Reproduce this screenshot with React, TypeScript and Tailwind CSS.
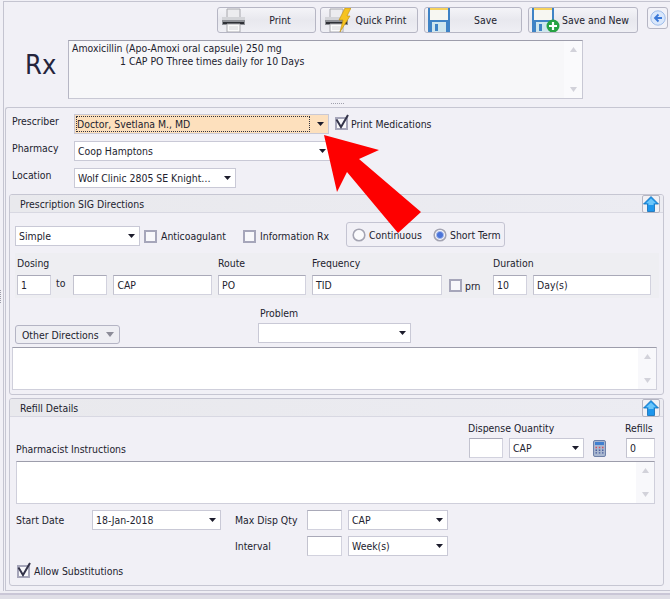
import type { ReactNode } from "react"

const font = "font-['DejaVu_Sans_Condensed','DejaVu_Sans',sans-serif]"

function Arrow() {
  return (
    <svg width="7" height="4" viewBox="0 0 7 4" className="shrink-0">
      <path d="M0 0H7L3.5 4Z" fill="#1c1c2c" />
    </svg>
  )
}

function Combo({ value, className, focus }: { value?: string; className: string; focus?: boolean }) {
  return (
    <div
      className={`flex h-[20px] shrink-0 items-center border border-[#c9c9d6] pr-[4px] ${
        focus ? "bg-[#fde0bd] pl-px" : "bg-white pl-[3px]"
      } ${className}`}
    >
      {focus ? (
        <div className="flex h-[16px] min-w-0 flex-1 items-center border border-dotted border-[#33333c]">{value}</div>
      ) : (
        <div className="min-w-0 flex-1 whitespace-nowrap">{value}</div>
      )}
      <div className="flex w-[14px] justify-end">
        <Arrow />
      </div>
    </div>
  )
}

function Input({ value, className }: { value?: string; className: string }) {
  return (
    <div className={`flex h-[20px] shrink-0 items-center border border-[#d2d2de] border-t-[#a9a9b8] border-l-[#c3c3cf] bg-white pl-[3px] ${className}`}>
      {value}
    </div>
  )
}

function Check({ on, className = "" }: { on?: boolean; className?: string }) {
  return (
    <div className={`relative h-[13px] w-[13px] shrink-0 border-2 border-[#a6a6ba] bg-[#f8f8fb] ${className}`}>
      {on && (
        <svg width="13" height="16" viewBox="0 0 13 16" className="absolute left-[-1px] top-[-6px] overflow-visible">
          <path d="M0.5 6.5L5 14L12 2" fill="none" stroke="#34344a" strokeWidth="2" />
        </svg>
      )}
    </div>
  )
}

function Radio({ on }: { on?: boolean }) {
  return (
    <svg width="14" height="14" viewBox="0 0 14 14" className="shrink-0">
      <circle cx="7" cy="7" r="5.8" fill="#fafafc" stroke="#a4a4b2" strokeWidth="1.6" />
      {on && <circle cx="7" cy="7" r="3.6" fill="#4b74d8" stroke="#a9bcef" />}
    </svg>
  )
}

function Printer() {
  return (
    <svg width="24" height="24" viewBox="0 0 24 24" className="shrink-0">
      <path d="M6 1H19V10H6Z" fill="#ececef" stroke="#a8a8ae" />
      <path d="M1 9H24V17H1Z" fill="#8f9197" />
      <path d="M1 9H24V12H1Z" fill="#d3d4d8" />
      <path d="M2 14H23V16H2Z" fill="#2e3036" />
      <path d="M6 16H19V24H6Z" fill="#fbfbfb" stroke="#a8a8ae" />
      <path d="M8 19H17M8 21H17" stroke="#d6d6da" />
    </svg>
  )
}

function Bolt() {
  return (
    <svg width="13" height="24" viewBox="0 0 13 24" className="shrink-0">
      <path d="M7 0H13L9 8H12L2 24L5 12H1Z" fill="#f6c321" stroke="#b98a10" strokeWidth="0.6" />
    </svg>
  )
}

function Floppy({ plus }: { plus?: boolean }) {
  return (
    <svg width="22" height="24" viewBox="0 0 22 24" className="shrink-0 overflow-visible">
      <path d="M0 0H22V24H0Z" fill="#3f83c6" />
      <path d="M2 0H20V2H2Z" fill="#f6d25c" />
      <path d="M2 2H20V12H2Z" fill="#f7f7f2" />
      <path d="M4 14H18V24H4Z" fill="#cfe6ee" />
      <path d="M7 16H10V23H7Z" fill="#3f83c6" />
      {plus && (
        <>
          <circle cx="21" cy="18" r="6.5" fill="#27a243" />
          <path d="M21 14V22M17 18H25" stroke="#fff" strokeWidth="2.2" />
        </>
      )}
    </svg>
  )
}

function Tool({ children, label, className }: { children: ReactNode; label: string; className: string }) {
  return (
    <div className={`flex h-[26px] shrink-0 items-center overflow-hidden rounded-[3px] border border-[#b6b6c4] bg-gradient-to-b from-[#f4f4f8] via-[#e8e8ee] to-[#efeff4] pl-[3px] ${className}`}>
      {children}
      <div className="flex-1 whitespace-nowrap text-center">{label}</div>
    </div>
  )
}

function UpButton() {
  return (
    <div className="flex h-[18px] w-[18px] items-center justify-center rounded-[2px] border border-[#b5b5c2] bg-[#f1f1f5]">
      <svg width="16" height="16" viewBox="0 0 16 16">
        <path d="M8 0.5L15.5 8H11.5V15.5H4.5V8H0.5Z" fill="#1e96ec" stroke="#0c6cb8" strokeWidth="0.8" />
        <path d="M8 2.5L3 7.2H5.5V9H10.5V7.2H13Z" fill="#6cc6fa" />
      </svg>
    </div>
  )
}

function SectionHead({ title }: { title: string }) {
  return (
    <div className="flex h-[18px] items-start justify-between border-b border-[#d8d8e2] bg-gradient-to-r from-[#e9e9ed] to-[#ececf2] pl-[10px] pr-[3px]">
      <span className="pt-[3px]">{title}</span>
      <UpButton />
    </div>
  )
}

function Memo({ className }: { className: string }) {
  return (
    <div className={`flex border border-[#cfcfdb] border-t-[#9d9dab] bg-white ${className}`}>
      <div className="flex-1" />
      <div className="flex w-[18px] flex-col items-center justify-between bg-[#f8f8fb] py-[6px]">
        <svg width="7" height="5" viewBox="0 0 7 5"><path d="M0 5H7L3.5 0Z" fill="#d2d2da" /></svg>
        <svg width="7" height="5" viewBox="0 0 7 5"><path d="M0 0H7L3.5 5Z" fill="#d2d2da" /></svg>
      </div>
    </div>
  )
}

export default function App() {
  return (
    <div className={`${font} relative h-[599px] w-[670px] overflow-hidden bg-[#dfdee6] text-[10.4px] leading-[13px] text-[#22222e]`}>
      <div className="h-[591px] bg-[#f1f0f6] pl-[3px] pt-px">
        <div className="h-[590px] border-l border-t border-[#c4c4d0]">
          {/* toolbar */}
          <div className="flex pt-[5px]">
            <Tool label="Print" className="ml-[213px] w-[99px]"><Printer /></Tool>
            <Tool label="Quick Print" className="ml-[4px] w-[98px] pr-[6px]">
              <Printer />
              <div className="ml-[-10px]"><Bolt /></div>
            </Tool>
            <Tool label="Save" className="ml-[6px] w-[98px]"><Floppy /></Tool>
            <Tool label="Save and New" className="ml-[6px] w-[110px]"><Floppy plus /></Tool>
            <div className="ml-[9px] flex h-[22px] w-[21px] items-center justify-center rounded-[3px] border border-[#b6b6c4] bg-[#f2f2f8]">
              <svg width="16" height="16" viewBox="0 0 16 16">
                <circle cx="8" cy="8" r="7.2" fill="#d9e7fb" stroke="#9fbdea" />
                <path d="M8.5 4.5L5 8L8.5 11.5M5 8H12" fill="none" stroke="#3b78d8" strokeWidth="1.8" />
              </svg>
            </div>
          </div>

          {/* drug summary */}
          <div className="mt-[7px] flex">
            <div className="w-[64px] pl-[21px] pt-[7px] text-[27px] leading-[36px] text-[#24243c]">Rx</div>
            <div className="flex h-[59px] w-[515px] border border-[#c8c8d4] border-l-[#b6b6c4] border-t-[#9d9dab] bg-[#f7f7f9]">
              <div className="flex-1 pl-[3px] pt-[1px]">
                <div>Amoxicillin (Apo-Amoxi oral capsule) 250 mg</div>
                <div className="pl-[48px]">1 CAP PO Three times daily for 10 Days</div>
              </div>
              <div className="flex w-[18px] flex-col items-center justify-between bg-[#fafafc] py-[6px]">
                <svg width="7" height="5" viewBox="0 0 7 5"><path d="M0 5H7L3.5 0Z" fill="#d2d2da" /></svg>
                <svg width="7" height="5" viewBox="0 0 7 5"><path d="M0 0H7L3.5 5Z" fill="#d2d2da" /></svg>
              </div>
            </div>
          </div>

          {/* splitter grip */}
          <div className="ml-[327px] mt-[4px] h-[1px] w-[13px] border-t border-dotted border-[#a0a0ac]" />

          {/* main panel */}
          <div className="ml-px mt-[3px] h-[484px] rounded-tl-[3px] border-b border-l border-t border-[#c6c6d2]">
            <div className="pl-[6px] pt-[6px]">
              <div className="flex items-start">
                <span className="w-[62px] pt-px">Prescriber</span>
                <Combo value="Doctor, Svetlana M., MD" focus className="w-[255px]" />
                <Check on className="ml-[6px] mt-[3px]" />
                <span className="ml-[3px] mt-[4px]">Print Medications</span>
              </div>
              <div className="mt-[7px] flex items-start">
                <span className="w-[62px] pt-px">Pharmacy</span>
                <Combo value="Coop Hamptons" className="w-[257px]" />
              </div>
              <div className="mt-[7px] flex items-start">
                <span className="w-[62px] pt-px">Location</span>
                <Combo value="Wolf Clinic 2805 SE Knight…" className="w-[162px]" />
              </div>
            </div>

            {/* sig */}
            <div className="ml-[3px] mt-[6px] h-[201px] w-[655px] overflow-hidden rounded-[3px] border border-[#c6c6d2]">
              <SectionHead title="Prescription SIG Directions" />
              <div className="flex h-[34px] items-end pl-[5px]">
                <Combo value="Simple" className="mb-px w-[125px]" />
                <Check className="mb-[4px] ml-[4px]" />
                <span className="mb-[4px] ml-[4px] w-[82px] whitespace-nowrap">Anticoagulant</span>
                <Check className="mb-[4px]" />
                <span className="mb-[4px] ml-[4px] w-[86px] whitespace-nowrap">Information Rx</span>
                <div className="flex h-[25px] w-[159px] items-center rounded-[3px] border border-[#c4c4d2] pl-[5px]">
                  <Radio />
                  <span className="ml-[3px] mt-[2px] w-[64px] whitespace-nowrap">Continuous</span>
                  <Radio on />
                  <span className="ml-[3px] mt-px whitespace-nowrap">Short Term</span>
                </div>
              </div>

              {/* dosing */}
              <div className="ml-[5px] mt-[6px] flex h-[45px] w-[644px] items-start bg-[#eeeef2] pl-[2px] pt-[4px]">
                <div className="w-[201px]">
                  <div className="mb-[5px] h-[13px]">Dosing</div>
                  <div className="flex items-center">
                    <Input value="1" className="w-[34px]" />
                    <span className="ml-[5px] mr-[8px] mt-[-4px]">to</span>
                    <Input className="w-[34px]" />
                    <Input value="CAP" className="ml-[6px] w-[99px]" />
                  </div>
                </div>
                <div className="w-[94px]">
                  <div className="mb-[5px] h-[13px]">Route</div>
                  <Input value="PO" className="w-[88px]" />
                </div>
                <div className="w-[137px]">
                  <div className="mb-[5px] h-[13px]">Frequency</div>
                  <Input value="TID" className="w-[130px]" />
                </div>
                <div className="flex w-[44px] items-center pt-[21px]">
                  <Check />
                  <span className="ml-[3px] mt-[2px]">prn</span>
                </div>
                <div>
                  <div className="mb-[5px] h-[13px]">Duration</div>
                  <div className="flex">
                    <Input value="10" className="w-[34px]" />
                    <Input value="Day(s)" className="ml-[6px] w-[118px]" />
                  </div>
                </div>
              </div>

              <div className="flex items-start pl-[5px]">
                <div className="mt-[27px] flex h-[19px] w-[105px] items-center rounded-[3px] border border-[#b4b4c4] bg-[#eeeef3] pl-[6px]">
                  <span className="mt-px flex-1 whitespace-nowrap">Other Directions</span>
                  <svg width="8" height="5" viewBox="0 0 8 5" className="mr-[5px]"><path d="M0 0H8L4 5Z" fill="#8c8c98" /></svg>
                </div>
                <div className="ml-[138px] mt-[9px] w-[153px]">
                  <div className="mb-[3px] pl-[2px]">Problem</div>
                  <Combo className="w-[153px]" />
                </div>
              </div>
              <Memo className="ml-[2px] mt-[3px] h-[43px] w-[645px]" />
            </div>

            {/* refill */}
            <div className="ml-[3px] mt-[3px] h-[188px] w-[655px] overflow-hidden rounded-[3px] border border-[#c6c6d2]">
              <SectionHead title="Refill Details" />
              <div className="flex h-[42px] pl-[6px]">
                <div className="w-[452px] pt-[26px]">Pharmacist Instructions</div>
                <div className="pt-[5px]">
                  <div className="mb-[3px] whitespace-nowrap">Dispense Quantity</div>
                  <div className="flex">
                    <Input className="ml-px w-[34px]" />
                    <Combo value="CAP" className="ml-[6px] w-[75px]" />
                    <svg width="13" height="17" viewBox="0 0 13 17" className="ml-[9px] mt-[2px]">
                      <rect x="0.5" y="0.5" width="12" height="16" rx="1.5" fill="#a9b7d0" stroke="#6e80a8" />
                      <rect x="2" y="2" width="9" height="3" fill="#3f7fd0" />
                      <path d="M2.5 7.5H4M5.8 7.5H7.3M9 7.5H10.5" stroke="#d8505a" strokeWidth="1.4" />
                      <path d="M2.5 10.2H4M5.8 10.2H7.3M9 10.2H10.5M2.5 12.9H4M5.8 12.9H7.3M9 12.9H10.5" stroke="#4a5f9e" strokeWidth="1.4" />
                    </svg>
                  </div>
                </div>
                <div className="ml-[19px] pt-[5px]">
                  <div className="mb-[3px]">Refills</div>
                  <Input value="0" className="ml-px w-[29px]" />
                </div>
              </div>
              <Memo className="ml-[6px] mt-[2px] h-[43px] w-[639px]" />
              <div className="mt-[6px] flex h-[20px] items-center pl-[6px]">
                <span className="w-[76px]">Start Date</span>
                <Combo value="18-Jan-2018" className="w-[129px]" />
                <span className="ml-[14px] w-[72px] whitespace-nowrap">Max Disp Qty</span>
                <Input className="w-[35px]" />
                <Combo value="CAP" className="ml-[6px] w-[100px]" />
              </div>
              <div className="mt-[6px] flex h-[20px] items-center pl-[225px]">
                <span className="w-[72px]">Interval</span>
                <Input className="w-[35px]" />
                <Combo value="Week(s)" className="ml-[6px] w-[100px]" />
              </div>
              <div className="mt-[9px] flex items-center pl-[7px]">
                <Check on />
                <span className="ml-[4px]">Allow Substitutions</span>
              </div>
            </div>
          </div>
        </div>
      </div>

      {/* window edge below the form */}
      <div className="h-[2px] bg-[#eeedf3]" />
      <div className="h-[2px] bg-[#c9c6d6]" />

      {/* resize grip on left edge */}
      <div className="absolute left-0 top-[290px] h-[13px] w-[2px] border-l border-dotted border-[#9c9ca8]" />

      {/* annotation */}
      <svg width="670" height="599" viewBox="0 0 670 599" className="absolute left-0 top-0">
        <path d="M324 135L379 150L359 159L421 212L398 233L347 172L337 192Z" fill="#fe0000" />
      </svg>
    </div>
  )
}
